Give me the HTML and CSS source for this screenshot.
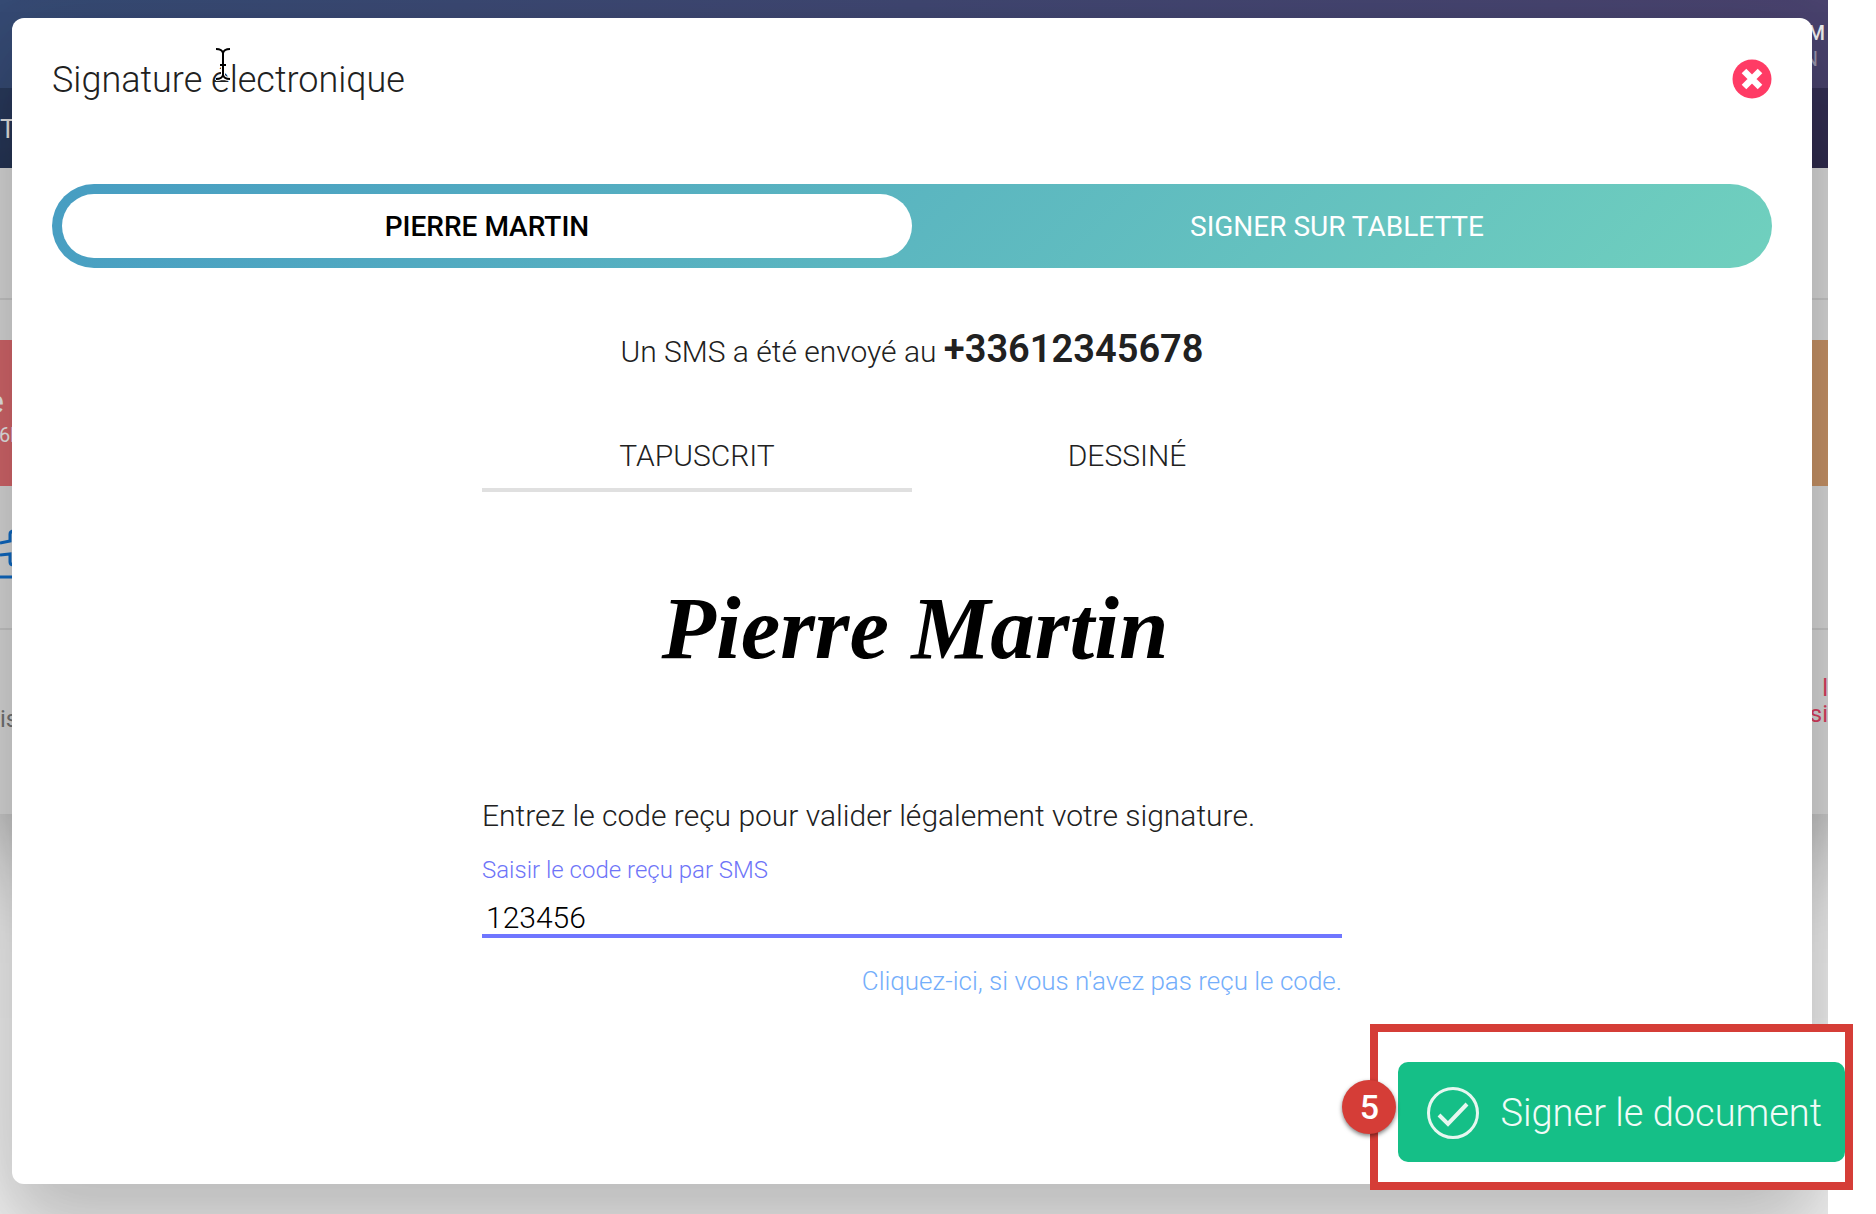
FILE: index.html
```html
<!DOCTYPE html>
<html lang="fr">
<head>
  <meta charset="UTF-8">
  <meta name="viewport" content="width=device-width, initial-scale=1.0">
  <title>Signature électronique</title>
  <link rel="stylesheet" href="styles.css">
</head>
<body>
  <div class="page">
    <div class="screen">
      <!-- page behind the dialog -->
      <div class="backdrop">
        <div class="topbar">
          <strong>M</strong>
          <span>N</span>
        </div>
        <div class="navbar">T</div>
        <div class="card">
          <div class="card-head"></div>
          <div class="tiles">
            <div class="tile red"><b>e</b><small>6h</small></div>
            <div class="tile orange"></div>
          </div>
          <div class="links">
            <svg class="link-icon" width="14" height="56" viewBox="0 0 14 56" fill="none" stroke="#0f6ac4" stroke-width="3">
              <path d="M0 15 L10 13 V6 Q10 3 14 3 M0 27 L10 26 V34 Q10 37 14 37"/>
              <path d="M0 49 H14"/>
            </svg>
          </div>
          <div class="status">
            <span class="status-left">is</span>
            <span class="status-right"><span>l</span><span>si</span></span>
          </div>
        </div>
      </div>

      <div class="modal" role="dialog" aria-labelledby="modalTitle">
        <div class="modal-header">
          <h1 id="modalTitle">Signature électronique</h1>
          <button type="button" class="close" aria-label="Fermer">
            <svg width="40" height="40" viewBox="0 0 40 40">
              <circle cx="20" cy="20" r="19.5" fill="#ff3b65"/>
              <path d="M12 12 L28 28 M28 12 L12 28" stroke="#fff" stroke-width="6.5"/>
            </svg>
          </button>
        </div>

        <div class="switch">
          <button type="button" class="active">PIERRE MARTIN</button>
          <button type="button">SIGNER SUR TABLETTE</button>
        </div>

        <p class="sent">Un SMS a été envoyé au <strong>+33612345678</strong></p>

        <form class="sign-form" id="signForm">
          <div class="tabs">
            <button type="button" class="tab selected">TAPUSCRIT</button>
            <button type="button" class="tab">DESSINÉ</button>
          </div>
          <div class="signature">Pierre Martin</div>
          <p class="help">Entrez le code reçu pour valider légalement votre signature.</p>
          <label for="smsCode">Saisir le code reçu par SMS</label>
          <input type="text" id="smsCode" value="123456" inputmode="numeric">
          <a href="#" class="resend">Cliquez-ici, si vous n'avez pas reçu le code.</a>
        </form>

        <svg class="cursor" width="16" height="34" viewBox="0 0 16 34" fill="none">
          <path d="M1 2 Q7 2 8 6 Q9 2 15 2 M8 5 V29 M1 32 Q7 32 8 28 Q9 32 15 32 M5 18 H11" stroke="#fff" stroke-width="4"/>
          <path d="M1 2 Q7 2 8 6 Q9 2 15 2 M8 5 V29 M1 32 Q7 32 8 28 Q9 32 15 32 M5 18 H11" stroke="#000" stroke-width="2"/>
        </svg>
      </div>
    </div>

    <div class="callout">
      <span class="step">5</span>
      <button type="submit" form="signForm" class="submit">
        <svg width="52" height="52" viewBox="0 0 52 52" fill="none" stroke="#e6f7f0">
          <circle cx="26" cy="26" r="24.5" stroke-width="3"/>
          <path d="M12 28 L21 37 L40 17" stroke-width="4"/>
        </svg>
        Signer le document
      </button>
    </div>
  </div>
</body>
</html>
```

FILE: styles.css
```css
* {
  box-sizing: border-box;
}
body {
  margin: 0;
  background: #fff;
  color: #212121;
  font-family: Roboto, sans-serif;
  font-weight: 300;
  font-size: 30px;
  line-height: 36px;
}
h1, p {
  margin: 0;
  font-weight: 300;
}
button, input {
  font: inherit;
  color: inherit;
  border: 0;
  background: none;
  padding: 0;
}
button {
  cursor: pointer;
}
.page {
  position: relative;
  min-height: 100vh;
}
.screen {
  position: relative;
  min-height: 100vh;
  margin-right: 48px;
  padding: 18px 16px 30px 12px;
  overflow: hidden;
  background: #f4f4f4;
}

/* page behind the dialog */
.backdrop {
  position: absolute;
  inset: 0;
  font-size: 24px;
  line-height: 26px;
}
.topbar {
  height: 88px;
  padding: 20px 3px 0 0;
  background: linear-gradient(90deg, #374c76, #4b4470);
  color: #f0f0f0;
  font-size: 20px;
  text-align: right;
}
.topbar strong,
.topbar span {
  display: block;
  font-weight: 500;
}
.topbar span {
  margin-right: 7px;
  color: #9a96ad;
  font-weight: 400;
}
.navbar {
  height: 80px;
  padding-top: 28px;
  background: linear-gradient(90deg, #2a3b5e, #363157);
  color: #e6e6e6;
  font-size: 26px;
  font-weight: 400;
}
.card {
  background: #dadada;
  box-shadow: 0 24px 120px rgba(0, 0, 0, 0.5);
}
.card-head {
  height: 132px;
  border-bottom: 2px solid #c8c8c8;
}
.tiles {
  display: flex;
  justify-content: space-between;
  padding-top: 40px;
}
.tile {
  width: 200px;
  height: 146px;
  color: #ececec;
}
.tile b,
.tile small {
  display: block;
  font-weight: 400;
}
.tile b {
  margin: 40px 0 0 -14px;
  font-size: 34px;
  line-height: 42px;
}
.tile small {
  margin-left: -1px;
  font-size: 20px;
}
.red {
  background: #d5676c;
}
.orange {
  background: #c99467;
}
.links {
  height: 144px;
  padding-top: 42px;
  border-bottom: 2px solid #c8c8c8;
}
.link-icon {
  display: block;
}
.status {
  display: flex;
  justify-content: space-between;
  height: 184px;
  color: #747474;
  font-weight: 400;
}
.status-left {
  padding-top: 76px;
}
.status-right {
  display: flex;
  flex-direction: column;
  align-items: flex-end;
  padding-top: 45px;
  color: #dc3e60;
}

/* dialog */
.modal {
  position: relative;
  min-height: calc(100vh - 48px);
  padding: 40px;
  background: #fff;
  border-radius: 12px;
  box-shadow: 0 48px 76px 6px rgba(0, 0, 0, 0.14), 0 18px 92px 16px rgba(0, 0, 0, 0.12);
}
.modal-header {
  display: flex;
  justify-content: space-between;
  align-items: center;
  height: 42px;
}
.modal-header h1 {
  padding-top: 2px;
  font-size: 36px;
  line-height: 42px;
}
.close svg {
  display: block;
}
.switch {
  display: flex;
  margin-top: 84px;
  padding: 10px;
  border-radius: 42px;
  background: linear-gradient(135deg, #479dc2, #70d0be);
}
.switch button {
  flex: 1;
  height: 64px;
  padding-top: 2px;
  border-radius: 32px;
  color: #fff;
  font-size: 28px;
  font-weight: 400;
}
.switch .active {
  background: #fff;
  color: #000;
  font-weight: 500;
}
.sent {
  margin-top: 57px;
  text-align: center;
  line-height: 48px;
}
.sent strong {
  font-size: 38px;
  font-weight: 600;
}
.sign-form {
  width: 50%;
  margin: 62px auto 0;
}
.tabs {
  display: flex;
}
.tab {
  flex: 1;
  padding-bottom: 14px;
  border-bottom: 4px solid transparent;
}
.tab.selected {
  border-color: #e0e0e0;
}
.signature {
  padding: 86px 0 120px 6px;
  color: #000;
  font-family: "Liberation Serif", serif;
  font-size: 89px;
  font-style: italic;
  font-weight: 700;
  line-height: 100px;
  text-align: center;
}
.sign-form label {
  display: block;
  margin: 22px 0 16px;
  color: #6e74f8;
  font-size: 24px;
  line-height: 28px;
}
.sign-form input {
  display: block;
  width: 100%;
  height: 38px;
  padding: 0 4px;
  border-bottom: 4px solid #6f76ff;
  color: #000;
  outline: none;
}
.resend {
  display: block;
  margin-top: 28px;
  color: #74aefb;
  font-size: 26px;
  line-height: 30px;
  text-align: right;
  text-decoration: none;
}
.cursor {
  position: absolute;
  top: 29px;
  left: 203px;
}

/* highlighted action */
.callout {
  position: absolute;
  right: 23px;
  bottom: 24px;
  padding: 30px 0 20px 20px;
  border: 8px solid #d53d37;
  background: #fff;
}
.submit {
  display: flex;
  align-items: center;
  gap: 21px;
  height: 100px;
  padding: 2px 23px 0 29px;
  border-radius: 10px;
  background: #15bf87;
  color: #f1fbf7;
  font-size: 38px;
  white-space: nowrap;
}
.step {
  position: absolute;
  top: 48px;
  left: -36px;
  width: 54px;
  height: 54px;
  border-radius: 50%;
  background: #d53d37;
  box-shadow: 0 2px 4px rgba(0, 0, 0, 0.5);
  color: #fff;
  font-size: 34px;
  font-weight: 500;
  line-height: 54px;
  text-align: center;
}
```
